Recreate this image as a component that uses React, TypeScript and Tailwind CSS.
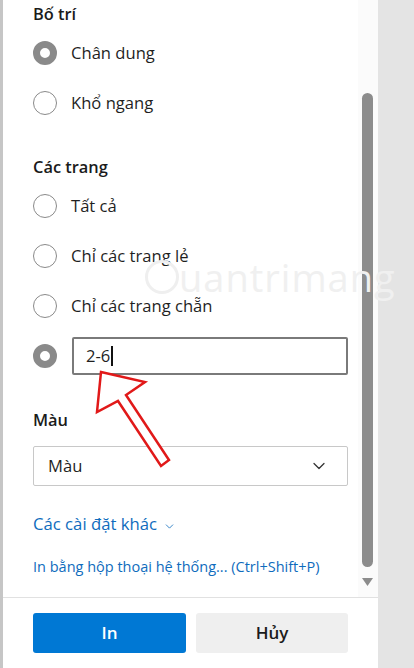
import { ChevronDown } from 'lucide-react';

const font = { fontFamily: '"Open Sans", "Noto Sans", "Liberation Sans", sans-serif' };

const Radio = ({ checked = false }: { checked?: boolean }) =>
  checked ? (
    <span className="box-border w-[24px] h-[24px] shrink-0 rounded-full border-[7px] border-[#8a8a8a] bg-white" />
  ) : (
    <span className="box-border w-[24px] h-[24px] shrink-0 rounded-full border border-[#8a8a8a] bg-white" />
  );

const Option = ({ label, checked = false }: { label: string; checked?: boolean }) => (
  <div className="h-[50px] flex items-center gap-[14px]">
    <Radio checked={checked} />
    <span className="text-[16.6px] text-[#1f1f1f]">{label}</span>
  </div>
);

const Heading = ({ children }: { children: string }) => (
  <div className="h-[24px] flex items-center text-[16.4px] font-semibold text-[#1b1b1b]">{children}</div>
);

export default function App() {
  return (
    <div className="w-[414px] h-[668px] flex overflow-hidden bg-[#e4e4e4]" style={font}>
      <div className="w-[3px] bg-[#c6c6c6]" />
      <div className="w-[375px] h-full flex flex-col bg-white">
        <div className="relative flex-1 flex">
          <div className="flex-1 flex flex-col pl-[30px] pt-[2px]">
            <Heading>Bố trí</Heading>
            <div className="mt-[2px]">
              <Option label="Chân dung" checked />
              <Option label="Khổ ngang" />
            </div>
            <div className="mt-[27px]">
              <Heading>Các trang</Heading>
            </div>
            <div className="mt-[2px]">
              <Option label="Tất cả" />
              <Option label="Chỉ các trang lẻ" />
              <Option label="Chỉ các trang chẵn" />
              <div className="h-[50px] flex items-center gap-[15px]">
                <Radio checked />
                <div className="w-[276px] h-[38px] box-border border-2 border-[#7a7a7a] rounded-[2px] flex items-center pl-[12px] text-[16.6px] text-[#1f1f1f]">
                  2-6
                  <span className="w-[2px] h-[20px] bg-[#111] ml-[1px]" />
                </div>
              </div>
            </div>
            <div className="mt-[27px]">
              <Heading>Màu</Heading>
            </div>
            <div className="mt-[14px] w-[315px] h-[40px] box-border border border-[#c8c8c8] rounded-[2px] flex items-center justify-between pl-[14px] pr-[18px]">
              <span className="text-[16.6px] text-[#1f1f1f]">Màu</span>
              <ChevronDown size={20} strokeWidth={1.5} className="text-[#333]" />
            </div>
            <div className="mt-[26px] h-[24px] flex items-center gap-[6px] text-[16.7px] text-[#0f6cbd]">
              Các cài đặt khác
              <ChevronDown size={13} strokeWidth={1.5} className="mt-[4px]" />
            </div>
            <div className="mt-[20px] h-[22px] flex items-center text-[14.5px] text-[#0f6cbd]">
              In bằng hộp thoại hệ thống... (Ctrl+Shift+P)
            </div>
          </div>
          <div className="w-[20px] bg-[#fbfbfb] flex flex-col items-center pt-[93px] pr-[1px]">
            <div className="w-[11px] h-[474px] rounded-full bg-[#8c8c8c]" />
            <svg width="11" height="9" viewBox="0 0 11 9" className="mt-[11px]">
              <polygon points="0,0 11,0 5.5,8" fill="#8c8c8c" />
            </svg>
          </div>
          <div className="absolute left-[142px] top-[258px] flex items-center pointer-events-none select-none">
            <span className="w-[34px] h-[34px] rounded-full border-[3px] border-[#efefef]" />
            <span className="text-[38px] leading-none text-[#f0f0f0] tracking-[1px]">uantrimang</span>
          </div>
          <svg className="absolute left-0 top-0 pointer-events-none" width="375" height="597">
            <polygon
              points="98,372 142,382 123,395 166,460 158,466 115,401 94,412"
              fill="white"
              stroke="#e11919"
              strokeWidth="2.5"
              strokeLinejoin="miter"
            />
          </svg>
        </div>
        <div className="h-[1px] bg-[#e1e1e1]" />
        <div className="h-[70px] flex items-start pt-[15px] pl-[30px] gap-[10px]">
          <button className="w-[153px] h-[40px] rounded-[3px] bg-[#0078d4] text-white text-[17px] font-semibold">In</button>
          <button className="w-[152px] h-[40px] rounded-[3px] bg-[#efefef] text-[#1b1b1b] text-[17px] font-semibold">Hủy</button>
        </div>
      </div>
    </div>
  );
}
